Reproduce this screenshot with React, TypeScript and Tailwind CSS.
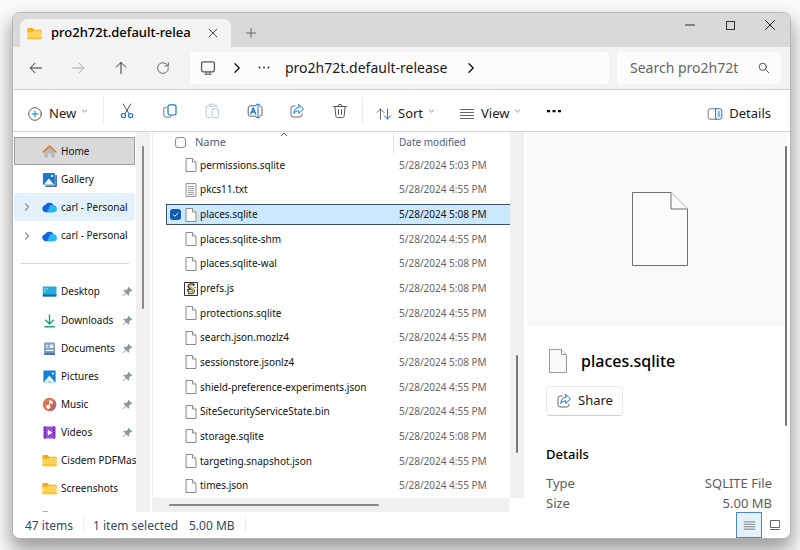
import React from 'react';

type IconProps = { className?: string };

const FolderIcon = ({ className = 'h-[15px] w-[15px]' }: IconProps) => (
  <svg viewBox="0 0 16 14" className={className} aria-hidden="true">
    <path d="M1 1.2h5l1.6 1.8h7.2c.5 0 .8.3.8.8V7H.4V1.8c0-.4.2-.6.6-.6z" fill="#f4ae1c" />
    <path d="M.4 5.2h5.4L7.4 4h7.4c.5 0 .8.3.8.8v7.4c0 .5-.3.8-.8.8H1.2c-.5 0-.8-.3-.8-.8z" fill="#ffd35c" />
    <path d="M.4 10.8h15.2v1.4c0 .5-.3.8-.8.8H1.2c-.5 0-.8-.3-.8-.8z" fill="#fcc63c" />
  </svg>
);

const Stroke = ({ className = 'h-4 w-4', children }: IconProps & { children: React.ReactNode }) => (
  <svg viewBox="0 0 16 16" className={`shrink-0 ${className}`} fill="none" stroke="currentColor" strokeLinecap="round" strokeLinejoin="round" aria-hidden="true">
    {children}
  </svg>
);

const ArrowLeft = () => (
  <Stroke><path d="M13.5 8h-11M7 3.2 2.3 8 7 12.8" /></Stroke>
);
const ArrowRight = () => (
  <Stroke><path d="M2.5 8h11M9 3.2 13.7 8 9 12.8" /></Stroke>
);
const ArrowUp = () => (
  <Stroke><path d="M8 13.5v-11M3.2 7.2 8 2.4l4.8 4.8" /></Stroke>
);
const RefreshIcon = () => (
  <Stroke><path d="M13 6A5.4 5.4 0 1 0 13.4 8M13.3 2.6V6H10" /></Stroke>
);
const CloseIcon = ({ className = 'h-4 w-4' }: IconProps) => (
  <Stroke className={className}><path d="m3.5 3.5 9 9m0-9-9 9" /></Stroke>
);
const ChevronRight = ({ className = 'h-4 w-4' }: IconProps) => (
  <Stroke className={className}><path d="M6 3.8 10.2 8 6 12.2" strokeWidth="1.4" /></Stroke>
);
const ChevronDown = () => (
  <svg viewBox="0 0 7 4" className="mb-[6px] h-1 w-[7px] shrink-0" fill="none" stroke="#8a8a8a" aria-hidden="true">
    <path d="m1 .7 2.5 2.4L6 .7" />
  </svg>
);
const Dots = () => (
  <svg viewBox="0 0 16 16" className="h-4 w-4" fill="currentColor" aria-hidden="true">
    <path d="M1 7h3v2.200H1zM6.500 7h3v2.200h-3zM12 7h3v2.200h-3z" />
  </svg>
);
const MonitorIcon = () => (
  <Stroke>
    <rect x="1.6" y="1.8" width="12.8" height="10" rx="1.5" stroke="#555" strokeWidth="1.3" />
    <path d="M6.3 12v2m3.4-2v2M4.8 14.2h6.4" stroke="#555" />
  </Stroke>
);
const PlusCircle = () => (
  <Stroke>
    <circle cx="8" cy="8" r="6.3" stroke="#555" />
    <path d="M8 5v6M5 8h6" stroke="#0f78d4" />
  </Stroke>
);
const CutIcon = () => (
  <Stroke>
    <path d="M4.2 1 9.9 10.6M11.8 1 6.1 10.6" stroke="#555" />
    <circle cx="4.4" cy="12.6" r="2.1" stroke="#0f78d4" strokeWidth="1.2" />
    <circle cx="11.6" cy="12.6" r="2.1" stroke="#0f78d4" strokeWidth="1.2" />
  </Stroke>
);
const CopyIcon = () => (
  <Stroke>
    <path d="M4.5 4.4h-1A1.7 1.7 0 0 0 1.8 6v5.8a2.4 2.4 0 0 0 2.4 2.4h3.6a1.7 1.7 0 0 0 1.6-1.3" stroke="#777" />
    <rect x="6" y="1.8" width="8" height="10.2" rx="1.8" stroke="#0f78d4" strokeWidth="1.2" />
  </Stroke>
);
const PasteIcon = () => (
  <Stroke>
    <path d="M5 2.5H3.6A1.4 1.4 0 0 0 2.2 4v9.2c0 .8.6 1.4 1.4 1.4h2.6M10.6 2.5H12A1.4 1.4 0 0 1 13.300 4" stroke="#c6c6c6" />
    <rect x="5" y="1.200" width="5.600" height="2.300" rx="1" stroke="#c6c6c6" />
    <rect x="8" y="5.800" width="6.400" height="8.900" rx="1.300" stroke="#a9cbe9" />
  </Stroke>
);
const RenameIcon = () => (
  <Stroke>
    <path d="M9.200 2.800H3.400A2.200 2.200 0 0 0 1.200 5v6a2.200 2.200 0 0 0 2.200 2.200h5.800M12.800 2.800A2.200 2.200 0 0 1 15 5v6a2.200 2.200 0 0 1-2.200 2.200" stroke="#666" />
    <path d="M3.700 11 6.200 4.800 8.700 11M4.600 9h3.200" stroke="#0f78d4" strokeWidth="1.300" />
    <path d="M11 1.500v13M9.500 1.300h3M9.500 14.700h3" stroke="#0f78d4" />
  </Stroke>
);
const ShareIcon = () => (
  <Stroke>
    <path d="M6 3H4.200A2.200 2.200 0 0 0 2 5.200v6.600A2.200 2.200 0 0 0 4.200 14h6.600a2.200 2.200 0 0 0 2.200-2.200V11" stroke="#666" />
    <path d="M9.800 1.600 14.500 6l-4.700 4.400V7.900C7.500 7.900 6 8.700 4.800 10.500 5 6.900 6.700 4.500 9.800 4.200z" stroke="#0f78d4" />
  </Stroke>
);
const TrashIcon = () => (
  <Stroke>
    <path d="M1.500 3.500h13M6 3.300a2 2 0 0 1 4 0M2.900 3.700l1 9.500c.1.900.7 1.400 1.500 1.400h5.200c.8 0 1.400-.5 1.500-1.400l1-9.500M6.500 6.700v4.600M9.500 6.700v4.600" stroke="#555" />
  </Stroke>
);
const SortIcon = () => (
  <Stroke>
    <path d="M4.500 13V3M1 6.500 4.500 3 8 6.500" stroke="#666" />
    <path d="M11.500 3v10M8.200 9.700l3.300 3.300 3.300-3.300" stroke="#0f78d4" />
  </Stroke>
);
const LinesIcon = ({ className = 'h-4 w-4' }: IconProps) => (
  <Stroke className={className}><path d="M1.500 3.500h13M1.500 6.500h13M1.500 9.500h13M1.500 12.500h13" stroke="#666" /></Stroke>
);
const PaneIcon = () => (
  <Stroke>
    <path d="M9 2.800H3.200a2 2 0 0 0-2 2v6.400a2 2 0 0 0 2 2H9" stroke="#777" />
    <path d="M9 2.800h3.800a2 2 0 0 1 2 2v6.400a2 2 0 0 1-2 2H9zM11 6h1.800M11 8h1.800M11 10h1.800" stroke="#0f78d4" />
  </Stroke>
);
const SearchIcon = () => (
  <Stroke><circle cx="6.800" cy="6.800" r="3.600" /><path d="m9.500 9.500 3.300 3.300" /></Stroke>
);

const HomeIcon = () => (
  <svg viewBox="0 0 16 16" className="h-[15px] w-[15px]" aria-hidden="true">
    <path d="M2.500 7.500 8 2.800l5.500 4.700v6.300c0 .4-.3.700-.7.700H9.800v-4.200H6.200v4.200h-3c-.4 0-.7-.3-.7-.7z" fill="#b9b9b9" />
    <path d="M1.200 8.500 8 2.200l6.800 6.300" fill="none" stroke="#d9772e" strokeWidth="1.700" strokeLinecap="round" strokeLinejoin="round" />
  </svg>
);
const GalleryIcon = () => (
  <svg viewBox="0 0 16 16" className="h-[15px] w-[15px]" aria-hidden="true">
    <path d="M15 3.500V15H3.500" fill="none" stroke="#123f8f" strokeWidth="1.400" />
    <rect x="1" y="1" width="12.700" height="12.700" rx="1" fill="#1976c9" />
    <path d="M2 13.200 7.300 7l5.300 6.200z" fill="#fff" />
    <circle cx="10.600" cy="4.200" r="1.200" fill="#fff" />
  </svg>
);
const PicturesIcon = () => (
  <svg viewBox="0 0 16 16" className="h-[15px] w-[15px]" aria-hidden="true">
    <rect x="1.500" y="1.500" width="13" height="13" rx="1" fill="#1080d8" />
    <path d="M1.800 14.500 7.800 7l6.400 7.500z" fill="#eef8ff" />
    <path d="m5.500 14.500 2.300-2.800 2.500 2.800z" fill="#9ed2f4" />
    <circle cx="11.600" cy="4.800" r="1.200" fill="#fff" />
  </svg>
);
const CloudIcon = () => (
  <svg viewBox="0 0 16 12" className="h-[12px] w-[15px]" aria-hidden="true">
    <path d="M4 11.500A3.800 3.800 0 0 1 3.500 4 5 5 0 0 1 12.300 4 3.800 3.800 0 0 1 12.400 11.500z" fill="#1590f0" />
    <path d="M3.500 4A5 5 0 0 1 12.300 4c-2.300.2-4 1.400-5.200 3.500L5 11.500H4A3.800 3.800 0 0 1 3.500 4z" fill="#1463d8" />
    <path d="M8.500 4.500c2.500-1.500 6.800-.2 7.300 3.500a3.500 3.500 0 0 1-3.400 3.500H6z" fill="#26b8f7" />
  </svg>
);
const DesktopIcon = () => (
  <svg viewBox="0 0 16 14" className="h-[13px] w-[15px]" aria-hidden="true">
    <rect x=".8" y="1.500" width="14.700" height="11" rx="1" fill="#27acd8" />
    <path d="M.8 10.300h14.700v1.200c0 .6-.4 1-1 1H1.800c-.6 0-1-.4-1-1z" fill="#1464b0" />
    <path d="M2.500 3.400h1.300v1.300H2.500zM2.500 6h1.300v1.300H2.500zM5 3.400h1.300v1.300H5z" fill="#e7faff" />
  </svg>
);
const DownloadIcon = () => (
  <svg viewBox="0 0 16 16" className="h-[15px] w-[15px]" fill="none" stroke="#15a37b" strokeWidth="1.500" aria-hidden="true">
    <path d="M8 1.500v10M3.500 7.300 8 11.800l4.500-4.500M2.500 14.700h11" />
  </svg>
);
const DocumentsIcon = () => (
  <svg viewBox="0 0 16 16" className="h-[15px] w-[15px]" aria-hidden="true">
    <rect x="2.300" y="1.500" width="11.500" height="13.500" rx="1" fill="#7f9fc0" />
    <rect x="2.300" y="12.500" width="11.500" height="2.500" rx="1" fill="#4b739c" />
    <path d="M4.200 4.500h2.600M4.200 6.500h2.600M4.200 10h7.600" stroke="#f2f7fc" strokeWidth="1.100" />
    <rect x="8.300" y="3.800" width="3.700" height="3.700" fill="#f2f7fc" />
  </svg>
);
const MusicIcon = () => (
  <svg viewBox="0 0 16 16" className="h-[15px] w-[15px]" aria-hidden="true">
    <circle cx="8" cy="8" r="7.200" fill="#dc7656" />
    <path d="M13 2.900A7.200 7.200 0 0 1 8 15.200z" fill="#c0607a" />
    <circle cx="6.700" cy="10.500" r="2.200" fill="#fff" />
    <path d="M8 10.500v-7l3 1.600V7L9 6" fill="#fff" stroke="#fff" strokeWidth=".7" />
  </svg>
);
const VideosIcon = () => (
  <svg viewBox="0 0 16 16" className="h-[15px] w-[15px]" aria-hidden="true">
    <rect x="1.500" y="1.500" width="13" height="13" rx="1" fill="#9b4be0" />
    <path d="M3.200 1.500v13M12.800 1.500v13" stroke="#431a7d" strokeWidth="1.400" strokeDasharray="1.600 1.400" />
    <path d="m6.200 5 5 3-5 3z" fill="#fff" />
  </svg>
);
const PinIcon = () => (
  <svg viewBox="0 0 12 12" className="h-[11px] w-[11px] shrink-0" aria-hidden="true">
    <path d="M7 .8 11.200 5l-1 .6-.6-.2-1.900 2 .2 2.200-.9.900-2.500-2.500L1.200 11.300l-.6-.6L3.900 7.400 1.500 5l.9-.9 2.200.2 2-1.900-.2-.6z" fill="#8b98a3" />
  </svg>
);

const PageIcon = () => (
  <svg viewBox="0 0 12 16" className="h-4 w-3" fill="#fdfdfd" stroke="#8a8a8a" aria-hidden="true">
    <path d="M1 1.500h6.500l3.500 3.500v9.500H1z" />
    <path d="M7.500 1.500V5H11" />
  </svg>
);
const TextPageIcon = () => (
  <svg viewBox="0 0 12 16" className="h-4 w-3" fill="#f4f4f4" stroke="#999" aria-hidden="true">
    <path d="M1 1.500h10v13H1z" />
    <path d="M3 4.500h6M3 6.500h6M3 8.500h6M3 10.500h6M3 12.500h6" stroke="#a6a6a6" />
  </svg>
);
const ScriptIcon = () => (
  <svg viewBox="0 0 14 14" className="h-[14px] w-[14px]" fill="none" aria-hidden="true">
    <path d="M.5.500h13v13H.5z" fill="#fafafa" stroke="#333" />
    <path d="M10.300 3.300C8.500 2 5.200 2.300 4.800 4.200S9.600 6.500 9.600 8.700 7.500 11.500 4.300 10.500" stroke="#222" strokeWidth="2.600" />
    <path d="M9 3.300C7.800 2.800 5.500 2.900 5.300 4.200S9.800 6.500 9.500 8.800 7 10.800 5 10.500" stroke="#f0cf6a" strokeWidth="1.400" />
    <path d="M3 7.500h3M3 9h2M10.500 5.500h1" stroke="#222" />
  </svg>
);

type NavItem = { label: string; icon: React.ReactNode; kind?: 'current' | 'hover'; expand?: boolean; pin?: boolean };

const topPlaces: NavItem[] = [
  { label: 'Home', icon: <HomeIcon />, kind: 'current' },
  { label: 'Gallery', icon: <GalleryIcon /> },
  { label: 'carl - Personal', icon: <CloudIcon />, kind: 'hover', expand: true },
  { label: 'carl - Personal', icon: <CloudIcon />, expand: true },
];

const pinnedPlaces: NavItem[] = [
  { label: 'Desktop', icon: <DesktopIcon />, pin: true },
  { label: 'Downloads', icon: <DownloadIcon />, pin: true },
  { label: 'Documents', icon: <DocumentsIcon />, pin: true },
  { label: 'Pictures', icon: <PicturesIcon />, pin: true },
  { label: 'Music', icon: <MusicIcon />, pin: true },
  { label: 'Videos', icon: <VideosIcon />, pin: true },
  { label: 'Cisdem PDFMas', icon: <FolderIcon /> },
  { label: 'Screenshots', icon: <FolderIcon /> },
];

const files = [
  { name: 'permissions.sqlite', time: '5:03' },
  { name: 'pkcs11.txt', time: '4:55' },
  { name: 'places.sqlite', time: '5:08' },
  { name: 'places.sqlite-shm', time: '4:55' },
  { name: 'places.sqlite-wal', time: '5:08' },
  { name: 'prefs.js', time: '5:08' },
  { name: 'protections.sqlite', time: '4:55' },
  { name: 'search.json.mozlz4', time: '4:55' },
  { name: 'sessionstore.jsonlz4', time: '5:08' },
  { name: 'shield-preference-experiments.json', time: '4:55' },
  { name: 'SiteSecurityServiceState.bin', time: '4:55' },
  { name: 'storage.sqlite', time: '5:08' },
  { name: 'targeting.snapshot.json', time: '4:55' },
  { name: 'times.json', time: '4:55' },
];

function fileIcon(name: string) {
  if (name.endsWith('.txt')) return <TextPageIcon />;
  if (name.endsWith('.js')) return <ScriptIcon />;
  return <PageIcon />;
}

function Place({ item }: { item: NavItem }) {
  const tone =
    item.kind === 'current'
      ? 'border-[#9c9c9c] bg-[#d9d9d9]'
      : item.kind === 'hover'
        ? 'rounded-sm border-transparent bg-[#e3f1fd]'
        : 'border-transparent';
  return (
    <li className="flex min-h-0 flex-1">
      <a href="#" className={`flex min-w-0 flex-1 items-center border pl-[6px] ${tone}`}>
        <span className="flex w-[21px] shrink-0 text-[#777]">{item.expand && <ChevronRight className="h-3 w-3" />}</span>
        <span className="flex w-[19px] shrink-0">{item.icon}</span>
        <span className="flex-1 whitespace-nowrap">{item.label}</span>
        {item.pin && <span className="pr-px"><PinIcon /></span>}
      </a>
    </li>
  );
}

function TitleBar() {
  return (
    <header className="flex h-[34px] shrink-0 items-end bg-[#d9d9d9] pl-[7px]">
      <div className="flex h-7 w-[211px] items-center rounded-t-lg bg-[#f3f3f3] pl-[7px] pr-[11px]">
        <FolderIcon />
        <span className="ml-[9px] flex-1 overflow-hidden whitespace-nowrap text-[13px] font-medium text-black">pro2h72t.default-relea</span>
        <button type="button" aria-label="Close tab" className="text-[#333]"><CloseIcon className="h-[14px] w-[14px]" /></button>
      </div>
      <button type="button" aria-label="New tab" className="flex h-7 w-10 items-center justify-center text-[#666]">
        <Stroke className="h-3 w-3"><path d="M8 2v12M2 8h12" strokeWidth="1.300" /></Stroke>
      </button>
      <div className="ml-auto flex self-start text-[#222]">
        <button type="button" aria-label="Minimize" className="flex h-6 w-10 items-center justify-center">
          <Stroke className="h-3 w-3"><path d="M2 8h12" strokeWidth="1.300" /></Stroke>
        </button>
        <button type="button" aria-label="Maximize" className="flex h-6 w-10 items-center justify-center">
          <span className="h-[9px] w-[9px] border border-[#333]" />
        </button>
        <button type="button" aria-label="Close" className="flex h-6 w-10 items-center justify-center"><CloseIcon /></button>
      </div>
    </header>
  );
}

function AddressBar() {
  return (
    <nav className="flex h-[43px] shrink-0 items-center border-b border-[#cfcfcf] bg-[#f3f3f3] pl-[2px] pr-[9px]" aria-label="Location">
      <div className="grid w-[169px] shrink-0 grid-cols-4 text-[#333]">
        <button type="button" aria-label="Back" className="flex justify-center"><ArrowLeft /></button>
        <button type="button" aria-label="Forward" disabled className="flex justify-center text-[#aaa]"><ArrowRight /></button>
        <button type="button" aria-label="Up" className="flex justify-center"><ArrowUp /></button>
        <button type="button" aria-label="Refresh" className="flex justify-center text-[#666]"><RefreshIcon /></button>
      </div>
      <div className="ml-[6px] flex h-8 flex-1 items-center rounded bg-[#fcfcfc] pl-[10px] text-[#1a1a1a]">
        <MonitorIcon />
        <span className="ml-[13px] flex"><ChevronRight /></span>
        <span className="ml-[11px] flex"><Stroke className="h-4 w-4"><path d="M3.500 7.500h.01M8 7.500h.01M12.500 7.500h.01" strokeWidth="1.800" /></Stroke></span>
        <span className="ml-[13px] whitespace-nowrap text-sm">pro2h72t.default-release</span>
        <span className="ml-4 flex"><ChevronRight /></span>
      </div>
      <label className="ml-2 flex h-8 w-[164px] items-center rounded bg-[#fcfcfc] pl-[13px] pr-[9px] text-[#555]">
        <input type="text" aria-label="Search" placeholder="Search pro2h72t" className="min-w-0 flex-1 bg-transparent text-sm outline-none placeholder:text-[#666]" />
        <SearchIcon />
      </label>
    </nav>
  );
}

function Toolbar() {
  const tools = [
    { label: 'Cut', icon: <CutIcon /> },
    { label: 'Copy', icon: <CopyIcon /> },
    { label: 'Paste', icon: <PasteIcon /> },
    { label: 'Rename', icon: <RenameIcon /> },
    { label: 'Share', icon: <ShareIcon /> },
    { label: 'Delete', icon: <TrashIcon /> },
  ];
  return (
    <div className="flex h-[42px] shrink-0 items-center border-b border-[#d4d4d4] pl-[14px] pr-[19px] text-[13px] text-[#1a1a1a]">
      <button type="button" className="flex h-8 w-[76px] items-center pt-[6px]">
        <PlusCircle />
        <span className="ml-[6px] mr-[5px]">New</span>
        <ChevronDown />
      </button>
      <span className="h-7 w-px bg-[#ececec]" />
      <div className="ml-[2px] mr-px grid w-[255px] grid-cols-6">
        {tools.map((t) => (
          <button key={t.label} type="button" aria-label={t.label} className="flex justify-center">{t.icon}</button>
        ))}
      </div>
      <span className="h-7 w-px bg-[#ececec]" />
      <button type="button" className="ml-[13px] flex h-8 w-[83px] items-center pt-[6px]">
        <SortIcon />
        <span className="ml-[6px] mr-[5px]">Sort</span>
        <ChevronDown />
      </button>
      <button type="button" className="flex h-8 w-[87px] items-center pt-[6px]">
        <LinesIcon />
        <span className="ml-[6px] mr-[5px]">View</span>
        <ChevronDown />
      </button>
      <button type="button" aria-label="More" className="flex text-black"><Dots /></button>
      <button type="button" className="ml-auto flex h-8 items-center pt-[6px]">
        <PaneIcon />
        <span className="ml-[6px]">Details</span>
      </button>
    </div>
  );
}

function Sidebar() {
  return (
    <aside className="flex w-[137px] shrink-0">
      <div className="flex min-w-0 flex-1 flex-col pl-px pr-px pt-[5px] text-[10px] text-[#111]">
        <ul className="flex min-h-0 flex-1 flex-col">
          {topPlaces.map((item, i) => <Place key={i} item={item} />)}
          <li className="flex min-h-0 flex-1 items-center" role="separator">
            <span className="ml-[7px] mr-[6px] h-px flex-1 bg-[#d5d5d5]" />
          </li>
          {pinnedPlaces.map((item) => <Place key={item.label} item={item} />)}
        </ul>
        <div className="h-[9px] shrink-0 overflow-hidden pl-7 pt-[6px]"><FolderIcon /></div>
      </div>
      <div className="w-[14px] shrink-0 bg-[#f0f0f0] pt-[14px]">
        <div className="ml-[6px] h-[163px] w-[2px] rounded bg-[#8a8a8a]" />
      </div>
    </aside>
  );
}

function FileList() {
  return (
    <section className="ml-[2px] flex min-w-0 flex-1 flex-col border-l border-[#f0f0f0]">
      <div className="flex min-h-0 flex-1">
        <div className="relative min-w-0 flex-1">
          <table className="h-full w-full table-fixed border-collapse text-left text-[10px] text-[#111]">
            <thead>
              <tr className="h-[21px] text-[11px] text-[#4c607a]">
                <th scope="col" className="p-0 font-normal">
                  <span className="flex h-[21px] items-center border-r border-[#e3e3e3] pl-[22px]">
                    <input type="checkbox" aria-label="Select all" className="h-[11px] w-[11px] appearance-none rounded-[3px] border border-[#8a8a8a] bg-[#fafafa]" />
                    <span className="ml-[9px]">Name</span>
                  </span>
                </th>
                <th scope="col" className="w-[116px] p-0 pl-[5px] text-[10px] font-normal">Date modified</th>
              </tr>
            </thead>
            <tbody>
              {files.map((f) => {
                const selected = f.name === 'places.sqlite';
                return (
                  <tr key={f.name}>
                    <td className="p-0 pl-[13px]">
                      <div className={`flex h-[21px] items-center border-y border-l ${selected ? 'border-[#3a5064] bg-[#cce8ff]' : 'border-transparent'}`}>
                        <label className="relative ml-[3px] flex w-[12px] shrink-0">
                          {selected && (
                            <>
                              <input type="checkbox" defaultChecked aria-label={f.name} className="h-[11px] w-[11px] appearance-none rounded-[3px] bg-[#0b5cb5]" />
                              <svg viewBox="0 0 11 11" className="absolute left-0 top-0 h-[11px] w-[11px]" fill="none" stroke="#fff" aria-hidden="true">
                                <path d="m3 5.500 1.800 1.800L8.200 4" />
                              </svg>
                            </>
                          )}
                        </label>
                        <span className="flex w-[18px] shrink-0 justify-center">{fileIcon(f.name)}</span>
                        <span className="whitespace-nowrap">{f.name}</span>
                      </div>
                    </td>
                    <td className="p-0">
                      <div className={`flex h-[21px] items-center whitespace-nowrap border-y pl-[5px] ${selected ? 'border-[#3a5064] bg-[#cce8ff]' : 'border-transparent text-[#666]'}`}>
                        5/28/2024 {f.time} PM
                      </div>
                    </td>
                  </tr>
                );
              })}
            </tbody>
          </table>
          <svg viewBox="0 0 8 5" className="absolute left-[127px] top-0 h-[5px] w-2" fill="none" stroke="#666" aria-hidden="true">
            <path d="m1 4 3-3 3 3" />
          </svg>
        </div>
        <div className="flex w-[14px] shrink-0 flex-col justify-end bg-[#f0f0f0] pb-[45px]">
          <div className="ml-[6px] h-[98px] w-[2px] rounded bg-[#777]" />
        </div>
      </div>
      <div className="mr-[15px] h-[14px] shrink-0 bg-[#f0f0f0] pt-[6px]">
        <div className="ml-4 h-[2px] w-[210px] rounded bg-[#888]" />
      </div>
    </section>
  );
}

function DetailsPane() {
  return (
    <aside className="relative ml-[3px] flex w-[263px] shrink-0 flex-col overflow-hidden">
      <div className="mr-1 flex h-[194px] shrink-0 items-center justify-center bg-[#f9f9f9] pl-[6px]">
        <svg viewBox="0 0 56 74" className="h-[74px] w-14" fill="#fcfcfc" stroke="#707070" role="img" aria-label="File preview">
          <path d="M.5.500h38.500L55.500 17v56.500H.5z" />
          <path d="M39 .5V17h16.500" />
        </svg>
      </div>
      <div className="pl-[19px] pr-[18px] pt-5 text-[13px] text-[#1a1a1a]">
        <div className="flex h-[30px] items-center">
          <svg viewBox="0 0 18 24" className="ml-[3px] h-6 w-[18px]" fill="#f9f9f9" stroke="#999" aria-hidden="true">
            <path d="M.5.500h12l5 5v18H.5z" />
            <path d="M12.500.500v5h5" />
          </svg>
          <h2 className="ml-[14px] text-base font-medium text-black">places.sqlite</h2>
        </div>
        <button type="button" className="mt-[10px] flex h-[30px] w-[77px] items-center rounded border border-[#e9e9e9] border-b-[#cfcfcf] bg-white pl-[9px]">
          <ShareIcon />
          <span className="ml-[6px]">Share</span>
        </button>
        <h3 className="mt-7 text-[13px] font-medium leading-5 text-black">Details</h3>
        <dl className="mt-[9px] grid grid-cols-[auto_auto] justify-between leading-5 text-[#5c5c5c]">
          <dt>Type</dt>
          <dd className="text-right">SQLITE File</dd>
          <dt>Size</dt>
          <dd className="text-right">5.00 MB</dd>
        </dl>
      </div>
      <div className="absolute right-[3px] top-[14px] h-[280px] w-[2px] rounded bg-[#777]" />
    </aside>
  );
}

function StatusBar() {
  return (
    <footer className="flex h-[26px] shrink-0 items-center bg-white pl-3 text-xs text-[#33475f]">
      <span className="w-[58px] whitespace-nowrap pt-[2px]">47 items</span>
      <span className="h-4 w-px bg-[#ececec]" />
      <span className="ml-[9px] w-24 whitespace-nowrap pt-[2px]">1 item selected</span>
      <span className="w-14 whitespace-nowrap pt-[2px]">5.00 MB</span>
      <span className="h-4 w-px bg-[#ececec]" />
      <div className="ml-auto flex items-center pr-[3px]">
        <button type="button" aria-label="Details view" aria-pressed="true" className="flex h-[26px] w-[26px] items-center justify-center border border-[#4a86c8] bg-[#e3f1fb]">
          <LinesIcon className="h-[13px] w-[13px]" />
        </button>
        <button type="button" aria-label="Large icons view" className="flex h-[26px] w-[25px] items-center justify-center">
          <svg viewBox="0 0 12 12" className="h-3 w-3" fill="none" stroke="#666" aria-hidden="true">
            <path d="M1.500 1.500h9v7h-9zM1 10.500h10" />
          </svg>
        </button>
      </div>
    </footer>
  );
}

export default function App() {
  return (
    <div className="h-screen overflow-hidden bg-[#fafafa] pb-[11px] pl-3 pr-[9px] pt-3 font-['Noto_Sans','Open_Sans',sans-serif]">
      <main className="flex h-full flex-col overflow-hidden rounded-lg border border-[#b5b5b5] bg-white shadow-[0_10px_18px_2px_rgba(0,0,0,0.36)]">
        <TitleBar />
        <AddressBar />
        <Toolbar />
        <div className="flex min-h-0 flex-1">
          <Sidebar />
          <FileList />
          <DetailsPane />
        </div>
        <StatusBar />
      </main>
    </div>
  );
}
